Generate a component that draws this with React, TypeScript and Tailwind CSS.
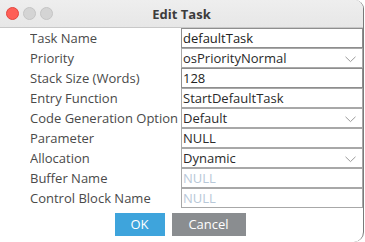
import React from "react";

const Chevron = () => (
  <svg width="11" height="7" viewBox="0 0 11 7" className="absolute right-[6px] top-[7px]">
    <path d="M0.5 0.8 L5.5 5.6 L10.5 0.8" fill="none" stroke="#9a9a9a" strokeWidth="1" />
  </svg>
);

type Row = { label: string; value: string; kind: "text" | "select" | "input" | "dim" };

const rows: Row[] = [
  { label: "Task Name", value: "defaultTask", kind: "input" },
  { label: "Priority", value: "osPriorityNormal", kind: "select" },
  { label: "Stack Size (Words)", value: "128", kind: "input" },
  { label: "Entry Function", value: "StartDefaultTask", kind: "text" },
  { label: "Code Generation Option", value: "Default", kind: "select" },
  { label: "Parameter", value: "NULL", kind: "text" },
  { label: "Allocation", value: "Dynamic", kind: "select" },
  { label: "Buffer Name", value: "NULL", kind: "dim" },
  { label: "Control Block Name", value: "NULL", kind: "dim" },
];

export default function App() {
  return (
    <div className="w-[365px] h-[242px] bg-white overflow-hidden" style={{ fontFamily: '"Open Sans", "DejaVu Sans", sans-serif' }}>
      <div className="w-[364px] h-[242px] bg-white border-r border-[#7a7a7a] rounded-tr-[9px] rounded-br-[10px] overflow-hidden flex flex-col">
        <div className="relative h-[28px] shrink-0 bg-gradient-to-b from-[#eeeeee] to-[#e7e7e7] border-b border-[#c8c8c8] flex items-center justify-center">
          <div className="absolute left-[6px] top-[7px] flex gap-[4px]">
            <div className="w-[13px] h-[13px] rounded-full bg-[#fe5f57] border border-[#e2463f]" />
            <div className="w-[13px] h-[13px] rounded-full bg-[#d4d4d4] border border-[#c4c4c4]" />
            <div className="w-[13px] h-[13px] rounded-full bg-[#d4d4d4] border border-[#c4c4c4]" />
          </div>
          <span className="text-[13px] font-bold text-[#3c3c3c] leading-none pt-[1px]">Edit Task</span>
        </div>
        <div className="flex flex-col pl-[30px]">
          {rows.map((r) => (
            <div key={r.label} className="flex h-[20px]">
              <div className="w-[151px] text-[13px] text-[#4a4a4a] leading-[20px] whitespace-nowrap overflow-hidden">{r.label}</div>
              <div
                className={
                  "relative flex-1 h-[20px] border bg-white pl-[1px] text-[13px] leading-[18px] whitespace-nowrap " +
                  (r.kind === "input"
                    ? "border-[#8e8e8e] text-[#222]"
                    : r.kind === "dim"
                    ? "border-[#a8a8a8] text-[#b8c8d8]"
                    : "border-[#a8a8a8] text-[#2a2a2a]")
                }
              >
                {r.value}
                {r.kind === "select" && <Chevron />}
              </div>
            </div>
          ))}
        </div>
        <div className="flex justify-center gap-[7px] mt-[5px]">
          <div className="w-[50px] h-[23px] bg-[#3ea4dc] text-white text-[13px] leading-[23px] text-center ml-[-3px]">OK</div>
          <div className="w-[74px] h-[23px] bg-[#8a8d90] text-white text-[13px] leading-[23px] text-center">Cancel</div>
        </div>
      </div>
    </div>
  );
}
